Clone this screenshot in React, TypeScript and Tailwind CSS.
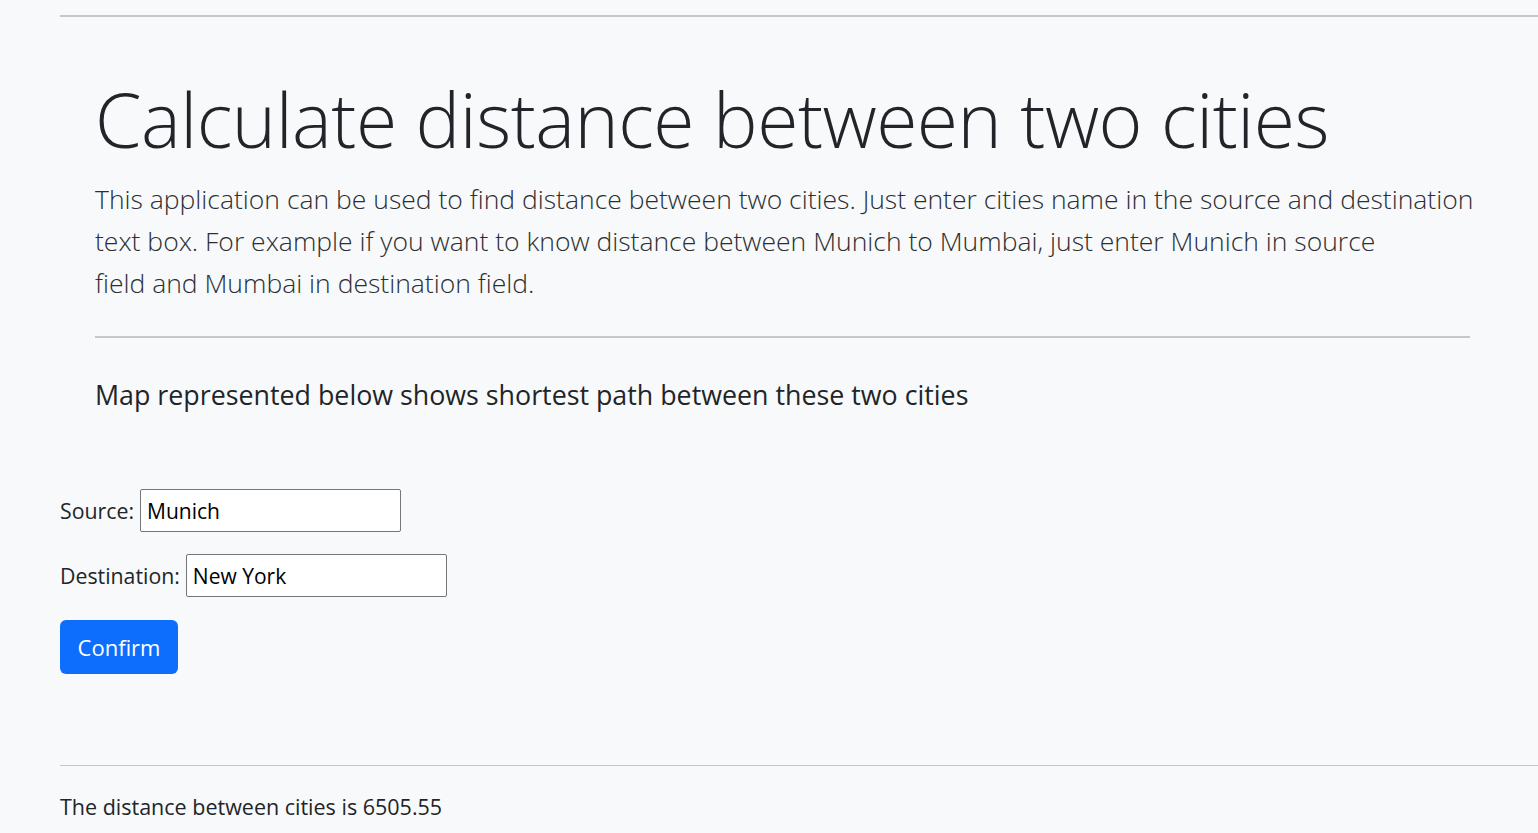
import React from "react";

export default function App() {
  const [source, setSource] = React.useState("Munich");
  const [destination, setDestination] = React.useState("New York");

  return (
    <div className="min-h-screen bg-[#f8f9fa] text-[#212529] font-['Open_Sans',sans-serif]">
      <div className="pl-[60px] pt-[15px]">
        <hr className="border-0 border-t-2 border-[#c6c7c8]" />

        {/* Jumbotron */}
        <div className="pl-[35px] pr-[68px] pt-[55px]">
          <h1 className="text-[75px] font-light leading-[94px] tracking-[-0.5px]">
            Calculate distance between two cities
          </h1>
          <p className="mt-[12px] text-[26.5px] font-light leading-[42px] text-[#2b2f33]">
            <span className="block whitespace-nowrap">
              This application can be used to find distance between two cities. Just enter cities name in the source and destination
            </span>
            <span className="block whitespace-nowrap">
              text box. For example if you want to know distance between Munich to Mumbai, just enter Munich in source
            </span>
            <span className="block whitespace-nowrap">field and Mumbai in destination field.</span>
          </p>
          <hr className="mt-[32px] border-0 border-t-2 border-[#c6c7c8]" />
          <p className="mt-[37px] text-[26.8px] leading-[40px]">
            Map represented below shows shortest path between these two cities
          </p>
        </div>
      </div>

      {/* Form */}
      <form className="mt-[74px] pl-[60px] text-[21.3px]" onSubmit={(e) => e.preventDefault()}>
        <div className="flex items-center gap-[6px]">
          <label htmlFor="source">Source:</label>
          <input
            id="source"
            value={source}
            onChange={(e) => setSource(e.target.value)}
            className="h-[43px] w-[261px] rounded-[2px] border border-[#767676] bg-white px-[6px] text-[21px] text-black outline-none"
          />
        </div>
        <div className="mt-[22px] flex items-center gap-[6px]">
          <label htmlFor="destination">Destination:</label>
          <input
            id="destination"
            value={destination}
            onChange={(e) => setDestination(e.target.value)}
            className="h-[43px] w-[261px] rounded-[2px] border border-[#767676] bg-white px-[6px] text-[21px] text-black outline-none"
          />
        </div>
        <button
          type="submit"
          className="mt-[23px] h-[54px] w-[118px] rounded-[6px] bg-[#0d6efd] text-[22px] text-white"
        >
          Confirm
        </button>
      </form>

      <div className="pl-[60px] pt-[91px]">
        <hr className="border-0 border-t border-[#c6c7c8]" />
        <p className="mt-[25px] text-[21.5px]">The distance between cities is 6505.55</p>
      </div>
    </div>
  );
}
